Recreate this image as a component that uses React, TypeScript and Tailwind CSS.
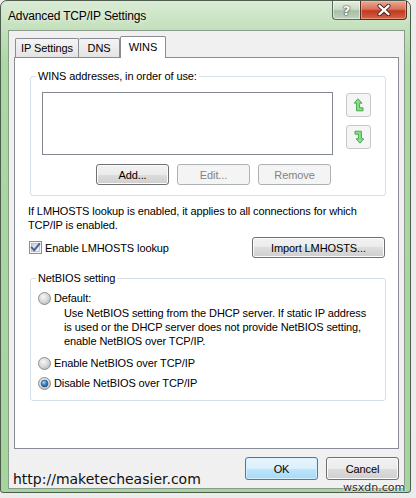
import React from "react";

type BtnKind = "normal" | "disabled" | "default";

function Btn({ label, kind = "normal", cls }: { label: string; kind?: BtnKind; cls: string }) {
  const base =
    "flex items-center justify-center rounded-[3px] border text-[11px] tracking-[-0.1px] leading-[14px] ";
  const k =
    kind === "disabled"
      ? "border-[#adb2b5] bg-[#f4f4f4] text-[#838383]"
      : kind === "default"
      ? "border-[#3c7fb1] bg-[linear-gradient(#eaf6fd_0%,#d9f0fc_50%,#bee6fd_50%,#a7d9f5_100%)] shadow-[inset_0_0_0_1px_#d6efff] text-black"
      : "border-[#707070] bg-[linear-gradient(#f2f2f2_0%,#ebebeb_50%,#dddddd_50%,#cfcfcf_100%)] shadow-[inset_0_0_0_1px_#fbfbfb] text-black";
  return <div className={base + k + " " + cls}>{label}</div>;
}

function Arrow({ down }: { down?: boolean }) {
  return (
    <div className="flex h-[24px] w-[25px] items-center justify-center rounded-[3px] border border-[#c4c8cc] bg-[#f5f5f5]">
      <svg width="10" height="14" viewBox="0 0 10 14">
        <g transform={down ? "rotate(180 5 7)" : undefined}>
          <polygon
            points="4,0.8 8,5.2 5.6,5.2 5.6,9.8 9,9.8 9,12.8 2.6,12.8 2.6,5.2 0.2,5.2"
            fill="#86e286"
            stroke="#3f9f45"
            strokeWidth="0.9"
            strokeLinejoin="round"
          />
        </g>
      </svg>
    </div>
  );
}

function CheckBox() {
  return (
    <svg width="13" height="13" viewBox="0 0 13 13" className="shrink-0">
      <defs>
        <linearGradient id="cbg" x1="0" y1="0" x2="1" y2="1">
          <stop offset="0" stopColor="#cbcfd5" />
          <stop offset="1" stopColor="#f6f6f6" />
        </linearGradient>
      </defs>
      <rect x="0.5" y="0.5" width="12" height="12" fill="#f6f6f6" stroke="#8f8f8f" />
      <rect x="2.5" y="2.5" width="8" height="8" fill="url(#cbg)" stroke="#b5b9bf" strokeWidth="0.8" />
      <path d="M2.8 6.6 L5.2 9.2 L10.2 3.2" stroke="#4a5e9a" strokeWidth="1.9" fill="none" strokeLinecap="square" />
    </svg>
  );
}

function Radio({ on, id }: { on?: boolean; id: string }) {
  return (
    <svg width="13" height="13" viewBox="0 0 13 13" className="shrink-0">
      <defs>
        <radialGradient id={"rg" + id} cx="0.4" cy="0.35" r="0.7">
          <stop offset="0" stopColor="#f7f7f7" />
          <stop offset="0.6" stopColor="#d6d6d6" />
          <stop offset="1" stopColor="#b9b9b9" />
        </radialGradient>
        <radialGradient id={"rd" + id} cx="0.4" cy="0.35" r="0.7">
          <stop offset="0" stopColor="#b6dcf7" />
          <stop offset="0.5" stopColor="#3d86c6" />
          <stop offset="1" stopColor="#1b4f86" />
        </radialGradient>
      </defs>
      <circle cx="6.5" cy="6.5" r="6" fill={"url(#rg" + id + ")"} stroke="#8e8f8f" />
      {on && <circle cx="6.5" cy="6.5" r="3.4" fill={"url(#rd" + id + ")"} stroke="#24507e" strokeWidth="0.6" />}
    </svg>
  );
}

export default function App() {
  return (
    <div className="relative h-[498px] w-[416px] overflow-hidden bg-[#ececec] font-['Liberation_Sans',Arial,sans-serif] text-black">
      {/* window */}
      <div className="flex h-[493px] w-[411px] flex-col rounded-t-[7px] rounded-b-[3px] border border-[#4d5c4d] bg-[linear-gradient(180deg,#d9ebd4_0px,#c5e1be_26px,#acd8a3_60px,#a5d59c_100%)]">
        {/* title bar */}
        <div className="flex h-[29px] items-start justify-between">
          <div className="self-center pl-[7px] text-[12px] leading-[14px] tracking-[-0.15px] [text-shadow:0_0_6px_#ffffff]">
            Advanced TCP/IP Settings
          </div>
          <div className="mr-[3px] flex">
            <div className="flex h-[19px] w-[28px] items-center justify-center rounded-bl-[4px] border border-t-0 border-r-0 border-[#5a6a5a] bg-[linear-gradient(#e4eee1_0%,#cbdcc7_45%,#aabea6_55%,#bfd2bb_100%)] shadow-[inset_0_0_0_1px_rgba(255,255,255,0.5)]">
              <span className="font-['DejaVu_Sans',sans-serif] text-[13px] font-bold leading-none text-white [text-shadow:0_0_2px_#2e3a2e,0_0_1px_#2e3a2e]">
                ?
              </span>
            </div>
            <div className="flex h-[19px] w-[47px] items-center justify-center rounded-br-[4px] border border-t-0 border-[#5a2a20] bg-[linear-gradient(#eba896_0%,#d8735a_45%,#c2391f_55%,#d3654a_100%)] shadow-[inset_0_0_0_1px_rgba(255,200,180,0.5)]">
              <svg width="14" height="12" viewBox="0 0 14 12">
                <path d="M2.5 1.8 L11.5 10.2 M11.5 1.8 L2.5 10.2" stroke="#3a1a12" strokeWidth="4" strokeLinecap="round" />
                <path d="M2.5 1.8 L11.5 10.2 M11.5 1.8 L2.5 10.2" stroke="#ffffff" strokeWidth="2.4" strokeLinecap="round" />
              </svg>
            </div>
          </div>
        </div>

        {/* client area */}
        <div className="ml-[7px] flex h-[459px] w-[397px] flex-col border border-[#8b9b8b] bg-[#f0f0f0] px-[5px] pt-[5px] pb-[8px] text-[11px] leading-[14px] tracking-[-0.1px]">
          {/* tabs */}
          <div className="flex h-[21px] items-end pl-[1px]">
            <div className="flex h-[19px] w-[64px] items-center justify-center rounded-t-[2px] border border-b-0 border-[#898c95] bg-[linear-gradient(#f4f4f4,#e4e4e4)]">
              IP Settings
            </div>
            <div className="flex h-[19px] w-[41px] items-center justify-center rounded-t-[2px] border border-b-0 border-l-0 border-[#898c95] bg-[linear-gradient(#f4f4f4,#e4e4e4)]">
              DNS
            </div>
            <div className="relative z-10 -mb-[1px] flex h-[22px] w-[46px] items-center justify-center rounded-t-[2px] border border-b-0 border-[#898c95] bg-white pb-[2px]">
              WINS
            </div>
          </div>

          {/* panel */}
          <div className="h-[392px] border border-[#898c95] bg-white pt-[11px] pr-[12px] pl-[15px]">
            <fieldset className="m-0 min-w-0 rounded-[3px] border border-[#d5dfe5] p-0">
              <legend className="ml-[5px] px-[2px] leading-[14px]">WINS addresses, in order of use:</legend>
              <div className="ml-[11px] mt-[9px] flex">
                <div className="h-[63px] w-[291px] border border-[#828790] bg-white" />
                <div className="ml-[13px] mt-[1px] flex flex-col gap-[8px]">
                  <Arrow />
                  <Arrow down />
                </div>
              </div>
              <div className="mt-[9px] mb-[10px] ml-[65px] flex gap-[8px]">
                <Btn label="Add..." cls="h-[21px] w-[73px]" />
                <Btn label="Edit..." kind="disabled" cls="h-[21px] w-[73px]" />
                <Btn label="Remove" kind="disabled" cls="h-[21px] w-[73px]" />
              </div>
            </fieldset>

            <p className="-ml-[2px] mt-[8px]">
              If LMHOSTS lookup is enabled, it applies to all connections for which
              <br />
              TCP/IP is enabled.
            </p>

            <div className="mt-[5px] flex h-[21px] items-center justify-between">
              <div className="-ml-[1px] flex items-center gap-[3px]">
                <CheckBox />
                <span>Enable LMHOSTS lookup</span>
              </div>
              <Btn label="Import LMHOSTS..." cls="mr-[1px] h-[21px] w-[133px]" />
            </div>

            <fieldset className="m-0 mt-[13px] min-w-0 rounded-[3px] border border-[#d5dfe5] p-0">
              <legend className="ml-[5px] px-[2px] leading-[14px]">NetBIOS setting</legend>
              <div className="ml-[7px] mt-[6px] flex h-[14px] items-center gap-[3px]">
                <Radio id="a" />
                <span>Default:</span>
              </div>
              <p className="ml-[33px] mt-[1px]">
                Use NetBIOS setting from the DHCP server. If static IP address
                <br />
                is used or the DHCP server does not provide NetBIOS setting,
                <br />
                enable NetBIOS over TCP/IP.
              </p>
              <div className="ml-[7px] mt-[8px] flex h-[14px] items-center gap-[3px]">
                <Radio id="b" />
                <span>Enable NetBIOS over TCP/IP</span>
              </div>
              <div className="ml-[7px] mt-[6px] mb-[10px] flex h-[14px] items-center gap-[3px]">
                <Radio id="c" on />
                <span>Disable NetBIOS over TCP/IP</span>
              </div>
            </fieldset>
          </div>

          {/* bottom buttons */}
          <div className="mt-[8px] flex justify-end gap-[8px]">
            <Btn label="OK" kind="default" cls="h-[23px] w-[73px]" />
            <Btn label="Cancel" cls="h-[23px] w-[73px]" />
          </div>
        </div>
      </div>

      {/* watermarks */}
      <div className="absolute left-[13px] top-[472px] font-['DejaVu_Sans',sans-serif] text-[14px] leading-[14px] text-[#111]">
        http://maketecheasier.com
      </div>
      <div className="absolute left-[343px] top-[482px] font-['DejaVu_Sans',sans-serif] text-[11px] leading-[12px] text-[#2a2a2a] [text-shadow:0_0_2px_#ffffff,0_0_2px_#ffffff]">
        wsxdn.com
      </div>
    </div>
  );
}
